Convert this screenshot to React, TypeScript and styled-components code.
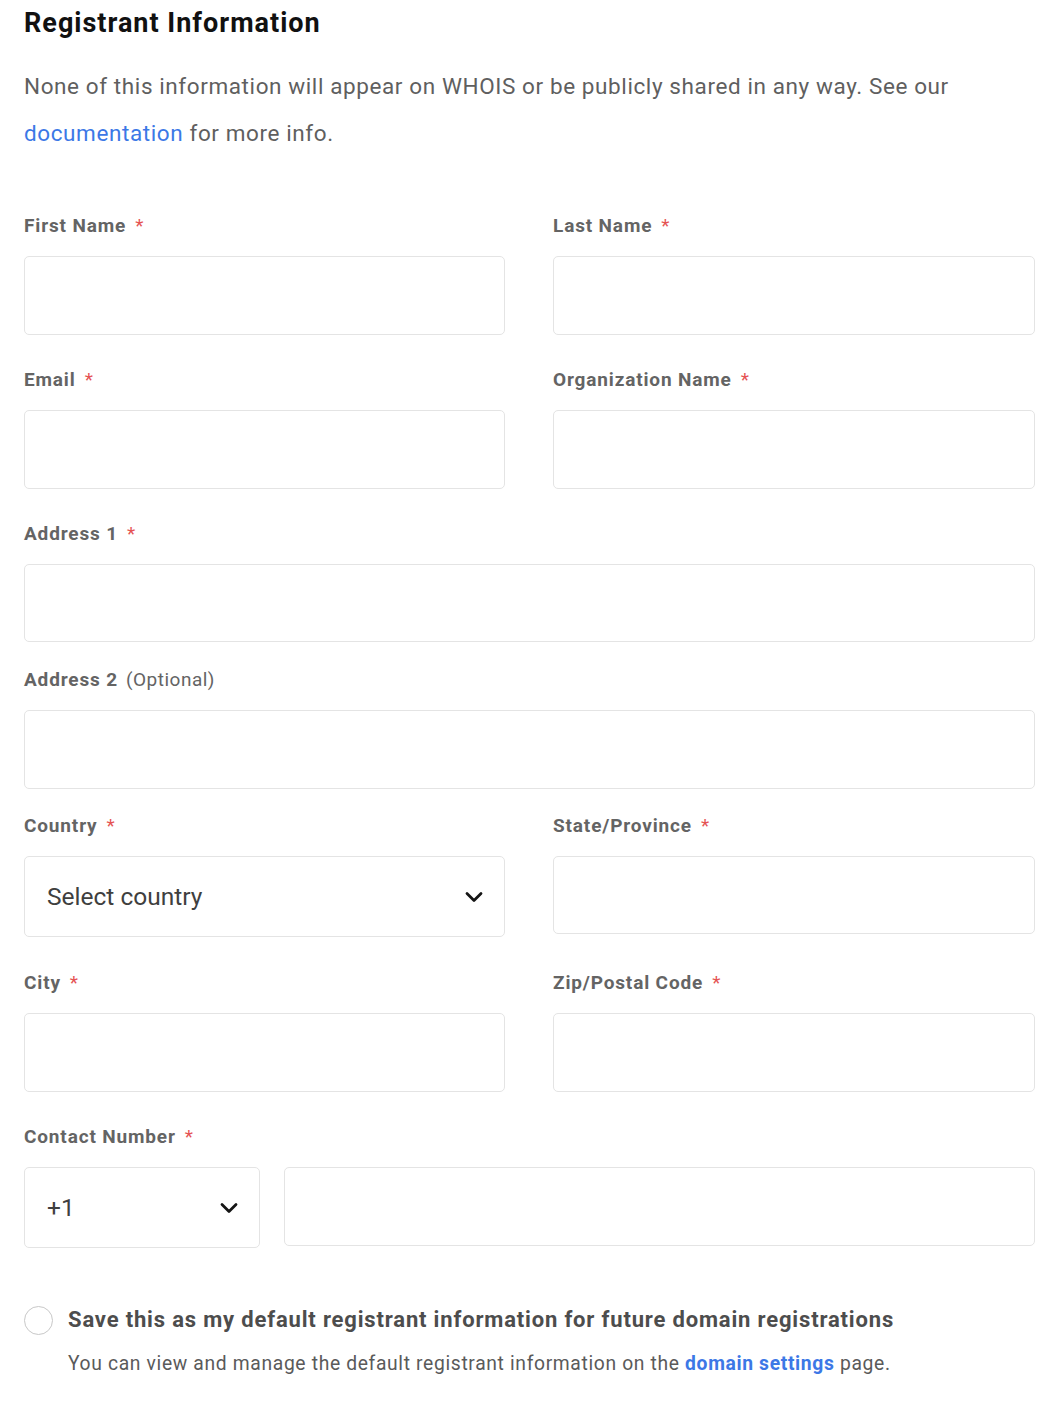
import React from "react";
import styled, { createGlobalStyle } from "styled-components";

const Global = createGlobalStyle`
  html, body { margin: 0; padding: 0; background: #fff; }
  body { font-family: Roboto, "Liberation Sans", Arial, sans-serif; -webkit-font-smoothing: antialiased; }
  * { box-sizing: border-box; }
`;

const Page = styled.div`
  padding: 4px 15px 20px 24px;
  width: 1050px;
`;

const Title = styled.h1`
  margin: 0;
  font-size: 27px;
  line-height: 38px;
  font-weight: 700;
  letter-spacing: 1px;
  color: #111;
`;

const Intro = styled.p`
  margin: 21px 0 0;
  font-size: 22.5px;
  line-height: 47px;
  letter-spacing: 0.6px;
  color: #5f5f5f;
`;

const Link = styled.a<{ $bold?: boolean }>`
  color: #3c78e6;
  text-decoration: none;
  font-weight: ${(p) => (p.$bold ? 700 : 400)};
`;

const Grid = styled.div`
  margin-top: 58px;
  display: grid;
  grid-template-columns: 481px 482px;
  column-gap: 48px;
`;

const Field = styled.div<{ $full?: boolean; $mb?: number }>`
  grid-column: ${(p) => (p.$full ? "1 / -1" : "auto")};
  display: flex;
  flex-direction: column;
  margin-bottom: ${(p) => p.$mb ?? 34}px;
`;

const Label = styled.label`
  font-size: 19px;
  line-height: 22px;
  font-weight: 700;
  letter-spacing: 0.85px;
  color: #646464;
  margin-bottom: 19px;
  display: flex;
  align-items: baseline;
`;

const Star = styled.span`
  color: #e55353;
  font-weight: 400;
  margin-left: 9px;
`;

const Optional = styled.span`
  font-weight: 400;
  margin-left: 8px;
  letter-spacing: 0.5px;
`;

const Input = styled.div<{ $h?: number }>`
  height: ${(p) => p.$h ?? 79}px;
  border: 1px solid #e4e4e4;
  border-radius: 5px;
  background: #fff;
`;

const Select = styled.div`
  height: 81px;
  border: 1px solid #e4e4e4;
  border-radius: 5px;
  display: flex;
  align-items: center;
  justify-content: space-between;
  padding: 0 20px 0 22px;
  font-size: 24.5px;
  color: #3f3f3f;
`;

const PhoneRow = styled.div`
  display: grid;
  grid-template-columns: 236px 1fr;
  column-gap: 24px;
  align-items: start;
`;

const SaveRow = styled.div`
  margin-top: 56px;
  display: flex;
  align-items: flex-start;
  gap: 15px;
`;

const Circle = styled.span`
  width: 29px;
  height: 29px;
  border-radius: 50%;
  border: 1.5px solid #c8c8c8;
  flex: none;
  margin-top: 2px;
`;

const SaveText = styled.div`
  display: flex;
  flex-direction: column;
`;

const SaveTitle = styled.div`
  font-size: 22px;
  line-height: 32px;
  font-weight: 700;
  letter-spacing: 0.83px;
  color: #4d4d4d;
`;

const SaveSub = styled.div`
  margin-top: 15px;
  font-size: 19.3px;
  line-height: 26px;
  letter-spacing: 0.65px;
  color: #5a5a5a;
`;

const Chevron = () => (
  <svg width="20" height="20" viewBox="0 0 20 20" fill="none">
    <path d="M3 6.5 L10 13.5 L17 6.5" stroke="#151515" strokeWidth="2.8" strokeLinecap="round" strokeLinejoin="round" />
  </svg>
);

const Req = ({ children }: { children: React.ReactNode }) => (
  <Label>
    {children}
    <Star>*</Star>
  </Label>
);

export default function App() {
  return (
    <Page>
      <Global />
      <Title>Registrant Information</Title>
      <Intro>
        None of this information will appear on WHOIS or be publicly shared in any way. See our{" "}
        <Link href="#">documentation</Link> for more info.
      </Intro>
      <Grid>
        <Field>
          <Req>First Name</Req>
          <Input />
        </Field>
        <Field>
          <Req>Last Name</Req>
          <Input />
        </Field>
        <Field>
          <Req>Email</Req>
          <Input />
        </Field>
        <Field>
          <Req>Organization Name</Req>
          <Input />
        </Field>
        <Field $full $mb={27}>
          <Req>Address 1</Req>
          <Input $h={78} />
        </Field>
        <Field $full $mb={26}>
          <Label>
            Address 2<Optional>(Optional)</Optional>
          </Label>
          <Input $h={79} />
        </Field>
        <Field $mb={35}>
          <Req>Country</Req>
          <Select>
            <span>Select country</span>
            <Chevron />
          </Select>
        </Field>
        <Field $mb={35}>
          <Req>State/Province</Req>
          <Input $h={78} />
        </Field>
        <Field>
          <Req>City</Req>
          <Input />
        </Field>
        <Field>
          <Req>Zip/Postal Code</Req>
          <Input />
        </Field>
        <Field $full $mb={0}>
          <Req>Contact Number</Req>
          <PhoneRow>
            <Select>
              <span>+1</span>
              <Chevron />
            </Select>
            <Input />
          </PhoneRow>
        </Field>
      </Grid>
      <SaveRow>
        <Circle />
        <SaveText>
          <SaveTitle>Save this as my default registrant information for future domain registrations</SaveTitle>
          <SaveSub>
            You can view and manage the default registrant information on the{" "}
            <Link href="#" $bold>
              domain settings
            </Link>{" "}
            page.
          </SaveSub>
        </SaveText>
      </SaveRow>
    </Page>
  );
}
